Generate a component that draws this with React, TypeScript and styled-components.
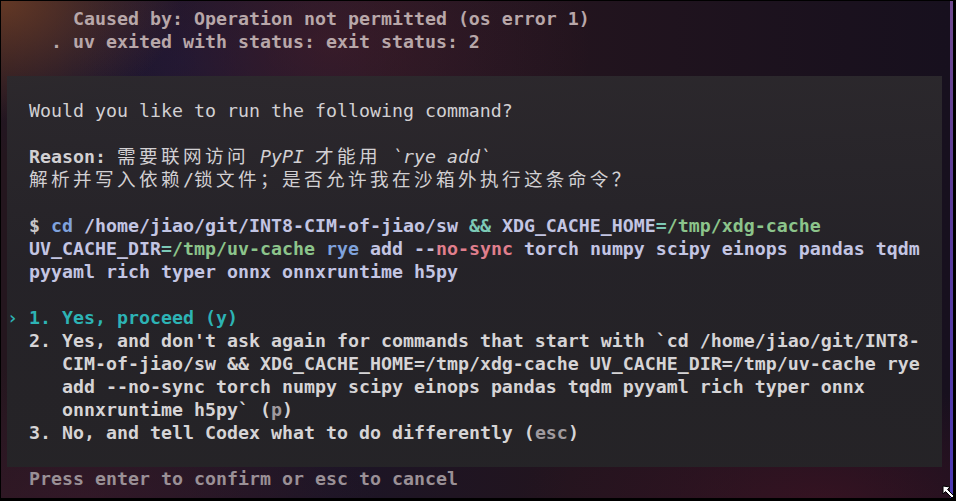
import React from "react";
import styled, { createGlobalStyle, css } from "styled-components";

const GlobalStyle = createGlobalStyle`
  html, body { margin: 0; padding: 0; background: #000; }
  #root { width: 956px; height: 501px; }
`;

const MONO = `"DejaVu Sans Mono", "Liberation Mono", monospace`;
const CJK = `"Noto Sans CJK SC", "DejaVu Sans Mono", sans-serif`;

const Frame = styled.div`
  position: relative;
  width: 956px;
  height: 501px;
  box-sizing: border-box;
  border-top: 1px solid #000;
  border-left: 1px solid #000;
  border-bottom: 3px solid #000;
  border-right: 3px solid #000;
  display: flex;
  overflow: hidden;
  background: #000;
`;

const Terminal = styled.div`
  flex: 1;
  box-sizing: border-box;
  padding: 6px 0 0 6px;
  display: flex;
  flex-direction: column;
  font-family: ${MONO};
  font-size: 18.27px;
  font-weight: 400;
  background:
    radial-gradient(ellipse 180px 120px at 0px 0px, rgba(110, 62, 38, 0.85), transparent 100%),
    radial-gradient(ellipse 260px 200px at 330px 40px, rgba(80, 32, 40, 0.55), transparent 100%),
    radial-gradient(ellipse 220px 160px at 180px 60px, rgba(20, 22, 58, 0.8), transparent 100%),
    radial-gradient(ellipse 300px 120px at 820px 500px, rgba(70, 20, 36, 0.6), transparent 100%),
    radial-gradient(ellipse 300px 140px at 80px 500px, rgba(60, 26, 44, 0.6), transparent 100%),
    linear-gradient(90deg, #24161e 0%, #1c1526 35%, #22141e 60%, #17101e 100%);
`;

const Rail = styled.div`
  width: 3px;
  background: linear-gradient(180deg, #6e4a8e 0%, #5a3c98 40%, #4c3ab4 100%);
`;

const Line = styled.div<{ $tone?: string; $bold?: boolean }>`
  height: 23px;
  line-height: 23px;
  white-space: pre;
  color: ${(p) => p.$tone || "#d2d0d3"};
  font-weight: ${(p) => (p.$bold ? 700 : "inherit")};
`;

const Block = styled.div`
  padding-left: 22px;
`;

const Panel = styled.div`
  width: 935px;
  box-sizing: border-box;
  padding: 23px 0;
  background: linear-gradient(180deg, rgba(44, 41, 45, 0.94) 0%, rgba(37, 35, 40, 0.95) 50%, rgba(37, 36, 39, 0.96) 100%);
`;

const Gap = styled.div`
  height: 23px;
`;

const Tok = styled.span<{ $c: string; $i?: boolean; $b?: boolean }>`
  color: ${(p) => p.$c};
  ${(p) => p.$i && css`font-style: italic;`}
  ${(p) => p.$b && css`font-weight: 700;`}
`;

const Han = styled.span`
  font-family: ${CJK};
  font-size: 18.6px;
  line-height: 18px;
  letter-spacing: 3.4px;
`;

const Option = styled.div`
  display: grid;
  grid-template-columns: 22px 33px 1fr;
  font-weight: 700;
`;

const Marker = styled.div`
  height: 23px;
  line-height: 23px;
  color: #2db3b5;
`;

const Num = styled.div<{ $active?: boolean }>`
  height: 23px;
  line-height: 23px;
  white-space: pre;
  color: ${(p) => (p.$active ? "#2db3b5" : "#d6d4d6")};
`;

const Cursor = styled.svg`
  position: absolute;
  right: -3px;
  bottom: -3px;
`;

const C = {
  text: "#d2d0d3",
  top: "#b8a7a9",
  cmd: "#c3c5e3",
  blue: "#7fa2dc",
  teal: "#7cc9b6",
  green: "#8cc48b",
  pink: "#e07f8d",
  cyan: "#2db3b5",
  opt: "#d6d4d6",
  dim: "#a09a9f",
  foot: "#9a9096",
};

export default function App() {
  return (
    <>
      <GlobalStyle />
      <Frame>
        <Terminal>
          <Block>
            <Line $tone={C.top} $bold>{"    Caused by: Operation not permitted (os error 1)"}</Line>
            <Line $tone={C.top} $bold>{"  . uv exited with status: exit status: 2"}</Line>
          </Block>
          <Gap />
          <Panel>
            <Block>
              <Line>Would you like to run the following command?</Line>
              <Gap />
              <Line>
                <Tok $c={C.text} $b>Reason:</Tok> <Han>需要联网访问</Han> <Tok $c={C.text} $i>PyPI</Tok> <Han>才能用</Han>{" "}
                <Tok $c={C.text} $i>`rye add`</Tok>
              </Line>
              <Line>
                <Han>解析并写入依赖</Han>/<Han>锁文件；是否允许我在沙箱外执行这条命令？</Han>
              </Line>
              <Gap />
              <Line $tone={C.cmd} $bold>
                <Tok $c="#c9c6c8">$</Tok> <Tok $c={C.blue}>cd</Tok> /home/jiao/git/INT8-CIM-of-jiao/sw{" "}
                <Tok $c={C.teal}>&amp;&amp;</Tok> XDG_CACHE_HOME<Tok $c={C.teal}>=</Tok>
                <Tok $c={C.green}>/tmp/xdg-cache</Tok>
              </Line>
              <Line $tone={C.cmd} $bold>
                UV_CACHE_DIR<Tok $c={C.teal}>=</Tok>
                <Tok $c={C.green}>/tmp/uv-cache</Tok> <Tok $c={C.blue}>rye</Tok> add --<Tok $c={C.pink}>no-sync</Tok> torch numpy scipy einops pandas tqdm
              </Line>
              <Line $tone={C.cmd} $bold>pyyaml rich typer onnx onnxruntime h5py</Line>
              <Gap />
            </Block>
            <Option>
              <Marker>›</Marker>
              <Num $active>1.</Num>
              <Line $tone={C.cyan}>Yes, proceed (y)</Line>
            </Option>
            <Option>
              <span />
              <Num>2.</Num>
              <div>
                <Line $tone={C.opt}>Yes, and don't ask again for commands that start with `cd /home/jiao/git/INT8-</Line>
                <Line $tone={C.opt}>CIM-of-jiao/sw &amp;&amp; XDG_CACHE_HOME=/tmp/xdg-cache UV_CACHE_DIR=/tmp/uv-cache rye</Line>
                <Line $tone={C.opt}>add --no-sync torch numpy scipy einops pandas tqdm pyyaml rich typer onnx</Line>
                <Line $tone={C.opt}>
                  onnxruntime h5py` (<Tok $c={C.dim}>p</Tok>)
                </Line>
              </div>
            </Option>
            <Option>
              <span />
              <Num>3.</Num>
              <Line $tone={C.opt}>
                No, and tell Codex what to do differently (<Tok $c={C.dim}>esc</Tok>)
              </Line>
            </Option>
          </Panel>
          <Block>
            <Line $tone={C.foot} $bold>Press enter to confirm or esc to cancel</Line>
          </Block>
        </Terminal>
        <Rail />
        <Cursor width="14" height="16" viewBox="0 0 14 16">
          <path d="M1 1 L1 9 L3.5 6.5 L10 13 L12 11 L5.5 4.5 L8 2 Z" fill="#fff" stroke="#000" strokeWidth="1" />
        </Cursor>
      </Frame>
    </>
  );
}
